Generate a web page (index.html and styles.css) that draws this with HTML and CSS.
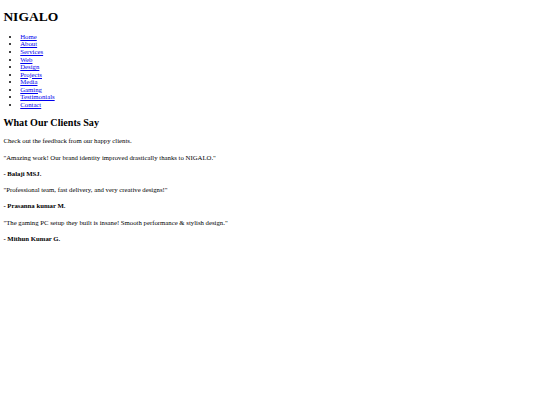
FILE: index.html
```html
<!DOCTYPE html>
<html lang="en">
<head>
<meta charset="utf-8">
<title>NIGALO</title>
<link rel="stylesheet" href="styles.css">
</head>
<body class="page">
<header class="site-header">
  <h1 class="logo">NIGALO</h1>
  <nav>
    <ul class="nav-list">
      <li><a href="#">Home</a></li>
      <li><a href="#">About</a></li>
      <li><a href="#">Services</a></li>
      <li><a href="#">Web</a></li>
      <li><a href="#">Design</a></li>
      <li><a href="#">Projects</a></li>
      <li><a href="#">Media</a></li>
      <li><a href="#">Gaming</a></li>
      <li><a href="#">Testimonials</a></li>
      <li><a href="#">Contact</a></li>
    </ul>
  </nav>
</header>
<section class="testimonials">
  <h2 class="section-title">What Our Clients Say</h2>
  <p class="text">Check out the feedback from our happy clients.</p>
  <p class="text">"Amazing work! Our brand identity improved drastically thanks to NIGALO."</p>
  <p class="text author">- Balaji MSJ.</p>
  <p class="text">"Professional team, fast delivery, and very creative designs!"</p>
  <p class="text author">- Prasanna kumar M.</p>
  <p class="text">"The gaming PC setup they built is insane! Smooth performance &amp; stylish design."</p>
  <p class="text author">- Mithun Kumar G.</p>
</section>
</body>
</html>
```
FILE: styles.css
```css
html { background: #ffffff; }
.page {
  margin: 3.375px;
  font-family: "Liberation Serif", "Times New Roman", serif;
  color: #000000;
  font-size: 6.75px;
}
.logo {
  font-size: 13.5px;
  line-height: 15.5px;
  font-weight: bold;
  margin: 6px 0 8px;
}
.nav-list {
  margin: 6.75px 0;
  padding-left: 16.875px;
  list-style: disc;
  line-height: 7.55px;
}
.nav-list a { color: #0000ee; text-decoration: underline; }
.section-title {
  font-size: 10.125px;
  line-height: 11.6px;
  font-weight: bold;
  margin: 8.4px 0 9px;
}
.text {
  font-size: 6.75px;
  line-height: 7.6px;
  margin: 8.7px 0;
}
.author { font-weight: bold; }
```
